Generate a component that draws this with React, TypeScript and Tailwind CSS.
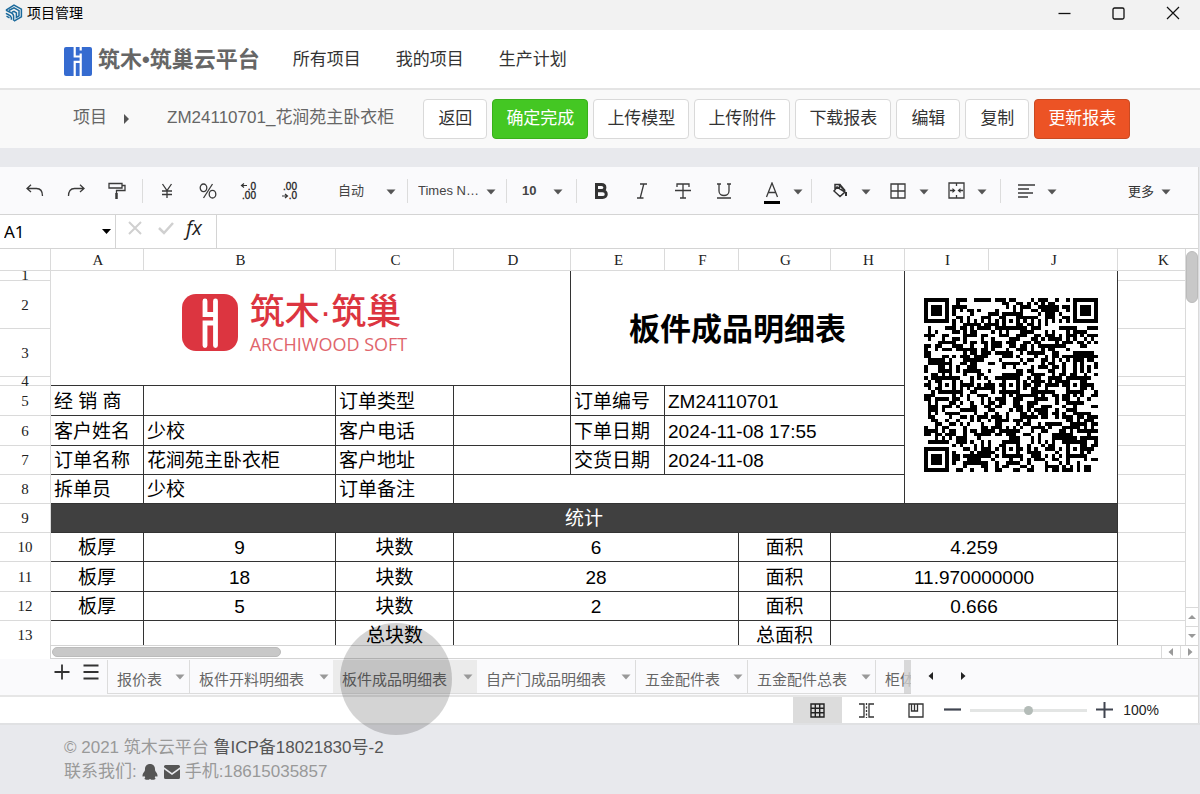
import React from "react";

const cjk = "font-['Liberation_Sans','Noto_Sans_CJK_SC',sans-serif]";

function Caret({ className = "text-[#555]" }: { className?: string }) {
  return (
    <svg width="10" height="6" viewBox="0 0 10 6" className={className} aria-hidden="true">
      <path d="M0.5 0.5h9L5 5.5z" fill="currentColor" />
    </svg>
  );
}

/* ---------- title bar and site header ---------- */

function TitleBar() {
  return (
    <div className="flex h-[30px] items-center bg-[#f2f2f2] pb-1 pl-[5px] pr-5 text-black">
      <svg width="18" height="18" viewBox="0 0 18 18" fill="none" stroke="#1b6a9c" strokeWidth="1.5" aria-hidden="true">
        <path d="M1 6.2 9 1.2l7.4 4v7.6L9 17.2" />
        <path d="M1 9.2c1.600 1.600 5 1.400 5.400 4.600v2" />
        <path d="M1.500 12.200l3 1.600M1 6.200c2.500 2 7 1.600 7.600 5.600v5" />
        <path d="M3.800 6.500 9 3.800l5 2.800v5.200l-2.600 1.600V9L9 7.400l-2 .9" />
      </svg>
      <span className="ml-1 text-[14px] leading-5">项目管理</span>
      <div className="ml-auto flex items-center gap-[41px]">
        <button aria-label="最小化">
          <svg width="13" height="13" viewBox="0 0 13 13" stroke="#111" strokeWidth="1.300"><path d="M.5 6.500h12" /></svg>
        </button>
        <button aria-label="最大化">
          <svg width="13" height="13" viewBox="0 0 13 13" fill="none" stroke="#111" strokeWidth="1.300"><rect x="1" y="1" width="11" height="11" rx="1.500" /></svg>
        </button>
        <button aria-label="关闭">
          <svg width="14" height="14" viewBox="0 0 14 14" stroke="#111" strokeWidth="1.200"><path d="M1 1l12 12M13 1 1 13" /></svg>
        </button>
      </div>
    </div>
  );
}

function SiteHeader() {
  return (
    <header className="flex h-[60px] items-center border-b-2 border-[#e4e4e4] bg-white pl-16 pt-[2px]">
      <a href="#home" className="flex items-center gap-[6px]">
        <svg width="28" height="29" viewBox="0 0 28 29" className="mt-[3px]" aria-hidden="true">
          <rect width="28" height="29" rx="2" fill="#356bd0" />
          <path d="M10.700 0v9.500h5.900M16.700 0v3.500M16.700 6.500v22.500M10.700 29V14.800h6" fill="none" stroke="#fff" strokeWidth="2.200" />
        </svg>
        <span className="text-[22px] font-bold leading-8 text-[#666]">筑木•筑巢云平台</span>
      </a>
      <nav className="ml-[33px] flex gap-[35px] text-[17px] leading-6 text-[#333]">
        <a href="#all">所有项目</a>
        <a href="#mine">我的项目</a>
        <a href="#plan">生产计划</a>
      </nav>
    </header>
  );
}

const actions = [
  { label: "返回", tone: "w-16 border-[#d9d9d9] bg-white text-[#333]" },
  { label: "确定完成", tone: "w-24 border-[#38b01a] bg-[#44c723] text-white" },
  { label: "上传模型", tone: "w-24 border-[#d9d9d9] bg-white text-[#333]" },
  { label: "上传附件", tone: "w-24 border-[#d9d9d9] bg-white text-[#333]" },
  { label: "下载报表", tone: "w-24 border-[#d9d9d9] bg-white text-[#333]" },
  { label: "编辑", tone: "w-16 border-[#d9d9d9] bg-white text-[#333]" },
  { label: "复制", tone: "w-16 border-[#d9d9d9] bg-white text-[#333]" },
  { label: "更新报表", tone: "w-24 border-[#c94a22] bg-[#ec5325] text-white" },
];

function ProjectBar() {
  return (
    <div className="flex h-[58px] items-center bg-[#f9f9f9] pl-[73px] text-[17px] leading-6 text-[#666]">
      <a href="#projects" className="pb-[2px]">项目</a>
      <svg width="5" height="10" viewBox="0 0 5 10" className="ml-[17px]" aria-hidden="true"><path d="M0 0l5 5-5 5z" fill="#555" /></svg>
      <span className="ml-[38px] pb-[2px]">ZM24110701_花涧苑主卧衣柜</span>
      <div className="ml-[29px] flex gap-[5px]">
        {actions.map((a) => (
          <button key={a.label} className={`h-10 whitespace-nowrap rounded border ${a.tone}`}>{a.label}</button>
        ))}
      </div>
    </div>
  );
}

/* ---------- spreadsheet toolbar ---------- */

function Tool({ label, children }: { label: string; children: React.ReactNode }) {
  return (
    <button aria-label={label} className="flex h-8 w-[41px] items-center justify-center">
      {children}
    </button>
  );
}

function SplitTool({ label, children }: { label: string; children: React.ReactNode }) {
  return (
    <div className="flex items-center gap-1">
      <button aria-label={label} className="flex h-8 w-[26px] items-center justify-center">{children}</button>
      <button aria-label={`${label}选项`} className="flex h-8 w-[18px] items-center justify-center pt-[3px]"><Caret /></button>
    </div>
  );
}

function Sep() {
  return <div className="h-6 w-px shrink-0 bg-[#dcdcdc]" />;
}

function Picker({ label, value, className }: { label: string; value: string; className: string }) {
  return (
    <div className={`grid items-center ${className}`}>
      <select aria-label={label} className="col-start-1 row-start-1 w-full appearance-none bg-transparent text-[13px] leading-5 text-[#444]">
        <option>{value}</option>
      </select>
      <span className="pointer-events-none col-start-1 row-start-1 justify-self-end pt-[3px]"><Caret /></span>
    </div>
  );
}

function DecimalIcon({ first, second, flip }: { first: string; second: string; flip: boolean }) {
  return (
    <svg width="18" height="20" viewBox="0 0 18 20" fontFamily="Liberation Sans" fontSize="10" fill="#222" stroke="#222" strokeWidth="0.3" aria-hidden="true">
      <text x="16" y="9" textAnchor="end">{first}</text>
      <text x="16" y="18" textAnchor="end">{second}</text>
      <path d={flip ? "M1 15h5.500M4 13l2.500 2L4 17" : "M7 4.500H1.500M4 2.500l-2.500 2 2.500 2"} fill="none" stroke="#333" strokeWidth="1.200" />
    </svg>
  );
}

const line = { fill: "none", stroke: "#3a3a3a", strokeWidth: 1.3 };

function Toolbar() {
  return (
    <div role="toolbar" className="flex h-[48px] items-center border-b border-[#d4d4d4] bg-[#fafafc] pl-[14px] pr-[27px] text-[#333]">
      <Tool label="撤销">
        <svg width="18" height="14" viewBox="0 0 18 14" {...line}><path d="M5 .8 1 4.500 5 8M1 4.500h9.500c4 0 6 2.500 6 7.500" /></svg>
      </Tool>
      <Tool label="重做">
        <svg width="18" height="14" viewBox="0 0 18 14" {...line}><path d="M13 .8l4 3.700L13 8M17 4.500H7.500c-4 0-6 2.500-6 7.500" /></svg>
      </Tool>
      <Tool label="格式刷">
        <svg width="18" height="18" viewBox="0 0 18 18" {...line}><path d="M1 1.500h13v4.500H1zM14 3.500h3v5H8.500v3" /><path d="M8.500 11v6" strokeWidth="2.500" /></svg>
      </Tool>
      <div className="ml-[5px]"><Sep /></div>
      <div className="ml-[3px] flex">
        <Tool label="货币">
          <svg width="14" height="16" viewBox="0 0 14 16" {...line}><path d="M2.500 1 7 7.500 11.500 1M7 7.500V15M2 8h10M2 11.500h10" /></svg>
        </Tool>
        <Tool label="百分比">
          <svg width="18" height="16" viewBox="0 0 18 16" {...line}><ellipse cx="4.500" cy="4.800" rx="3.300" ry="3.800" /><ellipse cx="13.500" cy="11.200" rx="3.300" ry="3.800" /><path d="M13.500 1 4.500 15" /></svg>
        </Tool>
        <Tool label="增加小数位"><DecimalIcon first=".0" second=".00" flip={false} /></Tool>
        <Tool label="减少小数位"><DecimalIcon first=".00" second=".0" flip /></Tool>
      </div>
      <Picker label="数字格式" value="自动" className="ml-7 w-[58px]" />
      <div className="ml-[11px]"><Sep /></div>
      <Picker label="字体" value="Times N…" className="ml-[10px] w-[78px]" />
      <div className="ml-[10px]"><Sep /></div>
      <Picker label="字号" value="10" className="ml-[15px] w-[41px] font-bold" />
      <div className="ml-[13px]"><Sep /></div>
      <div className="ml-[3px] flex">
        <Tool label="加粗">
          <svg width="14" height="16" viewBox="0 0 14 16" fill="none" stroke="#333" strokeWidth="3"><path d="M2.500 1.500h5c4.500 0 4.500 6 0 6h-5M2.500 7.800h6c5 0 5 6.700 0 6.700h-6M2.500 0v16" /></svg>
        </Tool>
        <Tool label="斜体">
          <svg width="12" height="16" viewBox="0 0 12 16" {...line}><path d="M4 1h7M1 15h6.500M7.800 1 4.200 15" /></svg>
        </Tool>
        <Tool label="删除线">
          <svg width="16" height="16" viewBox="0 0 16 16" {...line}><path d="M2 4V1h12v3M8 1v14M5 15h6M0 7.500h16" /></svg>
        </Tool>
        <Tool label="下划线">
          <svg width="16" height="16" viewBox="0 0 16 16" {...line}><path d="M1 1h4M11 1h4M3 1v7c0 6 10 6 10 0V1M1 15h14" /></svg>
        </Tool>
      </div>
      <div className="ml-[15px]">
        <SplitTool label="文字颜色">
          <svg width="18" height="22" viewBox="0 0 18 22" className="mt-[5px]" {...line}><path d="M3.500 15 9 1l5.500 14M5.500 10.500h7" /><path d="M1 20.500h16" stroke="#000" strokeWidth="3" /></svg>
        </SplitTool>
      </div>
      <div className="ml-1"><Sep /></div>
      <div className="ml-[15px] flex gap-[10px]">
        <SplitTool label="填充颜色">
          <svg width="16" height="15" viewBox="0 0 16 15" fill="none" stroke="#333" strokeWidth="1.500"><path d="M3 7V1.500h4.500V6M5 4l8 5-5 4.500-6-5.500z" /><path d="M14 9v4M7.500 1.500 13 8" strokeWidth="2" /></svg>
        </SplitTool>
        <SplitTool label="边框">
          <svg width="16" height="16" viewBox="0 0 16 16" {...line}><path d="M1 1h14v14H1zM8 1v14M1 8h14" /></svg>
        </SplitTool>
        <SplitTool label="合并单元格">
          <svg width="17" height="17" viewBox="0 0 17 17" {...line}><path d="M1 1h15v15H1zM8.500 1v3M8.500 13v3" /><path d="M2 8.500h4M15 8.500h-4" /><path d="M4.500 6 7.500 8.500l-3 2.500zM12.500 6l-3 2.500 3 2.500z" fill="#333" stroke="none" /></svg>
        </SplitTool>
      </div>
      <div className="ml-[9px]"><Sep /></div>
      <div className="ml-3">
        <SplitTool label="对齐">
          <svg width="17" height="14" viewBox="0 0 17 14" {...line}><path d="M0 1h17M0 5h11M0 9h15M0 13h10" /></svg>
        </SplitTool>
      </div>
      <button className="ml-auto flex items-center gap-[7px] pt-[2px] text-[13px] leading-5">更多<Caret /></button>
    </div>
  );
}

function FormulaBar() {
  return (
    <div className="flex h-[34px] items-stretch border-b border-[#d4d4d4] bg-white">
      <label className="flex w-[116px] items-center border-r border-[#d4d4d4] pl-1 pr-1">
        <input aria-label="名称框" defaultValue="A1" className="w-0 flex-1 bg-transparent font-['Noto_Sans',sans-serif] text-[17px] leading-6 text-black outline-none" />
        <svg width="9" height="5" viewBox="0 0 9 5" aria-hidden="true"><path d="M0 0h9L4.500 5z" /></svg>
      </label>
      <div className="flex w-[101px] items-start gap-4 border-r border-[#d4d4d4] pl-3 pt-[6px]">
        <button aria-label="取消"><svg width="14" height="14" viewBox="0 0 14 14" stroke="#d0d0d0" strokeWidth="2"><path d="M1 1l12 12M13 1 1 13" /></svg></button>
        <button aria-label="确认"><svg width="16" height="14" viewBox="0 0 16 14" fill="none" stroke="#d0d0d0" strokeWidth="2.500"><path d="M1 7l5 5 9-10" /></svg></button>
        <button aria-label="插入函数" className="-ml-1 font-['Open_Sans',sans-serif] text-[20px] italic leading-[14px] text-[#222]">fx</button>
      </div>
      <input aria-label="编辑栏" className="min-w-0 flex-1 px-2 outline-none" />
    </div>
  );
}

/* ---------- sheet drawings ---------- */

function SheetLogo() {
  return (
    <div className="flex items-center justify-center gap-3 pb-3 pr-8">
      <svg width="56" height="57" viewBox="0 0 56 57" aria-hidden="true">
        <rect width="56" height="57" rx="14" fill="#dc3540" />
        <path d="M23 7v13.500h10M33.500 7v44.500M23 51.500V29h10" fill="none" stroke="#fff" strokeWidth="4.800" strokeLinecap="round" />
      </svg>
      <div className="flex flex-col items-start pt-1 text-[#dc3540]">
        <span className="text-[35px] font-medium leading-9">筑木·筑巢</span>
        <span className="mt-1 font-['Open_Sans',sans-serif] text-[18px] leading-5 text-[#e0656c]">ARCHIWOOD SOFT</span>
      </div>
    </div>
  );
}

const QR_SIZE = 49;

function buildQr(): string {
  let seed = 24110701;
  const next = () => {
    seed = (Math.imul(seed, 1664525) + 1013904223) >>> 0;
    return seed / 4294967296;
  };
  const finders = [[3, 3], [QR_SIZE - 4, 3], [3, QR_SIZE - 4]];
  const marks = [[24, 6], [6, 24], [24, 24], [42, 24], [24, 42], [42, 42]];
  let d = "";
  for (let y = 0; y < QR_SIZE; y++) {
    for (let x = 0; x < QR_SIZE; x++) {
      let on = next() < 0.51;
      if (x === 6) on = y % 2 === 0;
      if (y === 6) on = x % 2 === 0;
      for (const [cx, cy] of marks) {
        const r = Math.max(Math.abs(x - cx), Math.abs(y - cy));
        if (r <= 2) on = r !== 1;
      }
      for (const [cx, cy] of finders) {
        const r = Math.max(Math.abs(x - cx), Math.abs(y - cy));
        if (r <= 4) on = r < 2 || r === 3;
      }
      if (on) d += `M${x} ${y}h1v1h-1z`;
    }
  }
  return d;
}

const qrPath = buildQr();

function QrCode() {
  return (
    <svg width="174" height="174" viewBox="0 0 49 49" shapeRendering="crispEdges" role="img" aria-label="二维码" className="mx-auto block">
      <path d={qrPath} />
    </svg>
  );
}

/* ---------- sheet ---------- */

const dark = "border-b border-r border-[#333] overflow-hidden whitespace-nowrap p-0";
const light = "border-b border-r border-[#dadada] p-0";

function RowHead({ n, fit = "leading-4" }: { n: number; fit?: string }) {
  return (
    <th scope="row" className={`${light} font-['Liberation_Serif',serif] text-[15px] font-normal text-[#222]`}>
      <div className={fit}>{n}</div>
    </th>
  );
}

function Row({ n, h = "h-[29px]", fit, children }: { n: number; h?: string; fit?: string; children?: React.ReactNode }) {
  return (
    <tr className={h}>
      <RowHead n={n} fit={fit} />
      {children}
      <td className={light} />
    </tr>
  );
}

function Cell({ children, center, span }: { children?: React.ReactNode; center?: boolean; span?: number }) {
  return (
    <td colSpan={span} className={`${dark} ${center ? "text-center" : "pl-[3px] text-left"}`}>
      <div className="pt-[2px]">{children}</div>
    </td>
  );
}

const stats = [
  { n: 10, h: "h-[29px]", thick: "9", count: "6", area: "4.259" },
  { n: 11, h: "h-[30px]", thick: "18", count: "28", area: "11.970000000" },
  { n: 12, h: "h-[29px]", thick: "5", count: "2", area: "0.666" },
];

function Sheet() {
  return (
    <table className="w-full min-w-[1208px] table-fixed border-separate border-spacing-0 text-[19px] leading-[26px] text-black">
      <colgroup>
        <col className="w-[51px]" />
        <col className="w-[93px]" />
        <col className="w-[192px]" />
        <col className="w-[118px]" />
        <col className="w-[117px]" />
        <col className="w-[94px]" />
        <col className="w-[74px]" />
        <col className="w-[92px]" />
        <col className="w-[74px]" />
        <col className="w-[84px]" />
        <col className="w-[129px]" />
        <col />
      </colgroup>
      <thead>
        <tr className="h-[22px] font-['Liberation_Serif',serif] text-[15px] leading-5 text-[#222]">
          <td className={light} />
          {["A", "B", "C", "D", "E", "F", "G", "H", "I", "J", "K"].map((c) => (
            <th key={c} scope="col" className={`${light} pl-[2px] font-normal`}>{c}</th>
          ))}
        </tr>
      </thead>
      <tbody>
        <tr className="h-[10px]">
          <RowHead n={1} fit="h-[9px] overflow-hidden leading-[9px]" />
          <td colSpan={4} rowSpan={4} className={dark}><SheetLogo /></td>
          <td colSpan={4} rowSpan={4} className={`${dark} pt-1 text-center text-[31px] font-bold`}>板件成品明细表</td>
          <td colSpan={2} rowSpan={8} className={`${dark} pb-1 pr-px`}><QrCode /></td>
          <td className={light} />
        </tr>
        <Row n={2} h="h-[48px]" />
        <Row n={3} h="h-[48px]" />
        <Row n={4} h="h-[9px]" fit="h-2 leading-2" />
        <Row n={5} h="h-[30px]">
          <Cell>经 销 商</Cell><Cell /><Cell>订单类型</Cell><Cell /><Cell>订单编号</Cell><Cell span={3}>ZM24110701</Cell>
        </Row>
        <Row n={6} h="h-[30px]">
          <Cell>客户姓名</Cell><Cell>少校</Cell><Cell>客户电话</Cell><Cell /><Cell>下单日期</Cell><Cell span={3}>2024-11-08 17:55</Cell>
        </Row>
        <Row n={7}>
          <Cell>订单名称</Cell><Cell>花涧苑主卧衣柜</Cell><Cell>客户地址</Cell><Cell /><Cell>交货日期</Cell><Cell span={3}>2024-11-08</Cell>
        </Row>
        <Row n={8}>
          <Cell>拆单员</Cell><Cell>少校</Cell><Cell>订单备注</Cell><Cell span={5} />
        </Row>
        <Row n={9}>
          <td colSpan={10} className="border-b border-r border-[#333] bg-[#404040] p-0 pt-[2px] text-center text-white">统计</td>
        </Row>
        {stats.map((s) => (
          <Row key={s.n} n={s.n} h={s.h}>
            <Cell center>板厚</Cell><Cell center>{s.thick}</Cell><Cell center>块数</Cell>
            <Cell center span={3}>{s.count}</Cell><Cell center>面积</Cell><Cell center span={3}>{s.area}</Cell>
          </Row>
        ))}
        <Row n={13}>
          <Cell /><Cell /><Cell center>总块数</Cell><Cell span={3} /><Cell center>总面积</Cell><Cell span={3} />
        </Row>
      </tbody>
    </table>
  );
}

function Arrow({ d, color = "#999" }: { d: string; color?: string }) {
  return <svg width="8" height="8" viewBox="0 0 8 8" aria-hidden="true"><path d={d} fill={color} /></svg>;
}

const leftArrow = "M6 0v8L1.500 4z";
const rightArrow = "M2 0v8l4.500-4z";

function SheetPane() {
  return (
    <div className="bg-white">
      <div className="flex h-[396px]">
        <div className="min-w-0 flex-1 overflow-hidden"><Sheet /></div>
        <div className="flex w-[13px] shrink-0 flex-col border-l border-[#dadada]">
          <div className="mt-[2px] h-[52px] rounded-full border border-[#bbb] bg-[#c8c8c8]" />
          <button aria-label="向上滚动" className="mt-auto flex h-[19px] items-center justify-center border-t border-[#dadada]"><Arrow d="M0 6h8L4 2z" /></button>
          <button aria-label="向下滚动" className="flex h-[19px] items-center justify-center border-t border-[#dadada]"><Arrow d="M0 2h8L4 6z" /></button>
        </div>
      </div>
      <div className="ml-[50px] flex h-[14px] items-stretch border-y border-l border-[#d4d4d4]">
        <div className="my-px ml-px w-[229px] rounded-full border border-[#bbb] bg-[#c8c8c8]" />
        <button aria-label="向左滚动" className="ml-auto flex w-[19px] items-center justify-center border-l border-[#dadada]"><Arrow d={leftArrow} /></button>
        <button aria-label="向右滚动" className="flex w-[18px] items-center justify-center border-l border-[#dadada]"><Arrow d={rightArrow} /></button>
      </div>
    </div>
  );
}

const tabs = [
  { label: "报价表", tone: "w-[82px] border-r" },
  { label: "板件开料明细表", tone: "w-[143px]" },
  { label: "板件成品明细表", tone: "w-[144px] bg-[#ebebeb] text-[#333]" },
  { label: "自产门成品明细表", tone: "w-[159px] border-r" },
  { label: "五金配件表", tone: "w-[112px] border-r" },
  { label: "五金配件总表", tone: "w-[128px] border-r" },
  { label: "柜体清单表", tone: "w-[120px]" },
];

function TabBar() {
  return (
    <div className="flex h-[38px] items-start border-b-2 border-[#e6e6e6] bg-[#fafafc] pl-[54px] pt-px">
      <button aria-label="新建工作表" className="mt-1"><svg width="16" height="16" viewBox="0 0 16 16" stroke="#333" strokeWidth="1.800"><path d="M8 .5v15M.5 8h15" /></svg></button>
      <button aria-label="全部工作表" className="ml-[13px] mt-1"><svg width="16" height="16" viewBox="0 0 16 16" stroke="#333" strokeWidth="1.800"><path d="M.5 1.500h15M.5 8h15M.5 14.500h15" /></svg></button>
      <div role="tablist" className="relative ml-2 flex w-[804px] overflow-hidden border-l border-[#dcdcdc]">
        {tabs.map((t) => (
          <button key={t.label} role="tab" className={`flex h-[34px] shrink-0 items-center justify-between whitespace-nowrap border-b border-[#dcdcdc] pl-[9px] pr-1 pt-[6px] text-[15px] leading-6 text-[#666] ${t.tone}`}>
            {t.label}<Caret className="mb-[6px] text-[#999]" />
          </button>
        ))}
        <div className="absolute inset-y-0 right-0 w-[7px] bg-[#d0d0d0]/80" />
      </div>
      <button aria-label="上一个" className="ml-4 mt-3"><Arrow d={leftArrow} color="#222" /></button>
      <button aria-label="下一个" className="ml-6 mt-3"><Arrow d={rightArrow} color="#222" /></button>
    </div>
  );
}

function StatusBar() {
  return (
    <div className="flex h-[26px] items-center justify-end bg-white pr-[39px]">
      <button aria-label="普通视图" className="flex h-full w-[49px] items-center justify-center bg-[#dcdcdc]">
        <svg width="15" height="15" viewBox="0 0 15 15" fill="none" stroke="#222" strokeWidth="1.400"><path d="M1 1h13v13H1zM5.300 1v13M9.700 1v13M1 5.300h13M1 9.700h13" /></svg>
      </button>
      <button aria-label="分页预览" className="flex h-full w-[49px] items-center justify-center">
        <svg width="15" height="15" viewBox="0 0 15 15" fill="none" stroke="#333" strokeWidth="1.300"><path d="M0 1h5v13H0M15 1h-5v13h5" /><path d="M7.500 0v15" strokeDasharray="2 1.500" /></svg>
      </button>
      <button aria-label="页面布局" className="flex h-full w-[49px] items-center justify-center">
        <svg width="16" height="15" viewBox="0 0 16 15" fill="none" stroke="#333" strokeWidth="1.300"><path d="M1 1h14v13H1zM3.500 1v7h6V1M6.500 1v7" /></svg>
      </button>
      <button aria-label="缩小" className="ml-1"><svg width="17" height="17" viewBox="0 0 17 17" stroke="#404550" strokeWidth="2.200"><path d="M0 7.500h17" /></svg></button>
      <input
        type="range"
        aria-label="缩放"
        defaultValue={50}
        className="mx-[9px] h-4 w-[117px] appearance-none bg-transparent [&::-webkit-slider-runnable-track]:h-[3px] [&::-webkit-slider-runnable-track]:bg-[#e3e5e4] [&::-webkit-slider-thumb]:-mt-[3px] [&::-webkit-slider-thumb]:size-[9px] [&::-webkit-slider-thumb]:appearance-none [&::-webkit-slider-thumb]:rounded-full [&::-webkit-slider-thumb]:bg-[#b4bcb8]"
      />
      <button aria-label="放大"><svg width="17" height="17" viewBox="0 0 17 17" stroke="#404550" strokeWidth="2"><path d="M0 7.500h17M8.500 0v16" /></svg></button>
      <span className="ml-[10px] text-[14px] leading-5 text-[#222]">100%</span>
    </div>
  );
}

function Footer() {
  return (
    <footer className="border-t-2 border-[#e0e1e3] pb-3 pl-16 pt-[11px] text-[17px] leading-6 text-[#999]">
      <p>
        © 2021 筑木云平台 <a href="#icp" className="text-[#555]">鲁ICP备18021830号-2</a>
      </p>
      <p className="flex items-center">
        联系我们:
        <a href="#qq" aria-label="QQ" className="ml-[5px] text-[#555]">
          <svg width="16" height="16" viewBox="0 0 16 16" fill="currentColor">
            <path d="M8 0C4.800 0 3 2.200 3 5c0 .8 0 1.300-.3 1.900C1.500 8.400.5 10 .5 11.600c0 1.700.8 1.500 1.700.1.200.7.600 1.300 1.100 1.800-1 .4-1.300 2 1 2.300 1.700.2 3-.3 3.700-.9.700.6 2 1.100 3.700.9 2.300-.3 2-1.900 1-2.300.5-.5.900-1.100 1.100-1.800.9 1.400 1.700 1.600 1.700-.1 0-1.600-1-3.200-2.200-4.700C13 6.300 13 5.800 13 5c0-2.800-1.800-5-5-5z" />
          </svg>
        </a>
        <a href="#mail" aria-label="邮箱" className="ml-[6px] text-[#555]">
          <svg width="16" height="14" viewBox="0 0 16 14" fill="currentColor"><path d="M1.500 0h13A1.500 1.500 0 0 1 16 1.500v.7L8 8 0 2.200v-.7A1.500 1.500 0 0 1 1.500 0zM0 4.200 8 10l8-5.800v8.300a1.500 1.500 0 0 1-1.500 1.500h-13A1.500 1.500 0 0 1 0 12.500z" /></svg>
        </a>
        <span className="ml-[5px]">手机:18615035857</span>
      </p>
    </footer>
  );
}

export default function App() {
  return (
    <div className={`relative min-h-screen bg-[#e8e9ed] ${cjk}`}>
      <TitleBar />
      <SiteHeader />
      <ProjectBar />
      <main className="mr-px mt-[19px] border-r border-[#dadada]">
        <Toolbar />
        <FormulaBar />
        <SheetPane />
        <TabBar />
        <StatusBar />
      </main>
      <Footer />
      <div className="pointer-events-none absolute left-[340px] top-[623px] size-28 rounded-full bg-black/[0.17]" />
    </div>
  );
}
